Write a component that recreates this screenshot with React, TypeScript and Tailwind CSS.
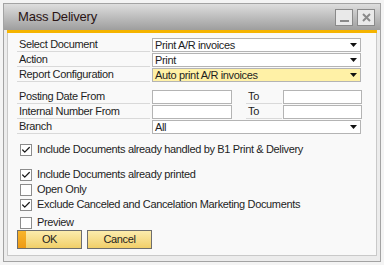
import { Check } from 'lucide-react';

type Row = {
  label: string;
  value: string;
  highlight?: boolean;
};

const topRows: Row[] = [
  { label: 'Select Document', value: 'Print A/R invoices' },
  { label: 'Action', value: 'Print' },
  { label: 'Report Configuration', value: 'Auto print A/R invoices', highlight: true },
];

function Arrow() {
  return (
    <svg width="7" height="4" viewBox="0 0 7 4" className="mr-[3px]">
      <path d="M0 0h7L3.5 4z" fill="#111" />
    </svg>
  );
}

function Combo({ value, highlight }: { value: string; highlight?: boolean }) {
  return (
    <div
      className={`ml-[2px] flex h-[14px] w-[209px] items-center justify-between border border-[#b4b4b4] pl-[2px] ${
        highlight ? 'bg-[#fff1a6]' : 'bg-white'
      }`}
    >
      <span className="leading-none">{value}</span>
      <Arrow />
    </div>
  );
}

function Label({ text, width = 'w-[133px]' }: { text: string; width?: string }) {
  return (
    <div className={`${width} h-[14px] border-b border-[#d9d9d9] pl-[2px] leading-[13px]`}>{text}</div>
  );
}

function CheckRow({ label, checked }: { label: string; checked: boolean }) {
  return (
    <div className="flex h-[15px] items-center gap-[5px] pl-[3px]">
      <div className="flex h-[12px] w-[12px] items-center justify-center border border-[#8c8c8c] bg-white">
        {checked && <Check size={10} strokeWidth={3} color="#1a1a1a" />}
      </div>
      <span className="leading-none">{label}</span>
    </div>
  );
}

export default function App() {
  return (
    <div
      className="h-[265px] w-[384px] bg-[#f4f4f4] pl-[3px] pt-[3px] text-[11px] tracking-[-0.35px] text-[#1e1e1e]"
      style={{ fontFamily: '"Liberation Sans", Arial, sans-serif' }}
    >
      <div className="flex h-[259px] w-[378px] flex-col border border-[#a3a3a3] bg-[#ececec]">
        {/* title bar */}
        <div className="flex h-[26px] items-center justify-between bg-gradient-to-b from-[#dedede] to-[#9e9e9e] pl-[14px] pr-[5px]">
          <span className="text-[13px] tracking-[-0.2px] text-[#2a1414]">Mass Delivery</span>
          <div className="flex gap-[4px] pt-[1px]">
            <div className="flex h-[17px] w-[18px] items-end justify-center border border-[#8a8a8a] bg-[#e9e9e9] pb-[3px]">
              <div className="h-[2px] w-[9px] bg-[#8a8a8a]" />
            </div>
            <div className="flex h-[17px] w-[18px] items-center justify-center border border-[#8a8a8a] bg-[#e9e9e9]">
              <svg width="9" height="9" viewBox="0 0 9 9">
                <path d="M1 1l7 7M8 1l-7 7" stroke="#8a8a8a" strokeWidth="2" />
              </svg>
            </div>
          </div>
        </div>

        <div className="flex flex-1 flex-col px-[3px] pb-[5px]">
          <div className="h-[3px] bg-[#f5b400]" />
          <div className="flex flex-1 flex-col border border-t-0 border-[#c9c9c9] bg-[#f9f9f9] pl-[9px] pt-[5px]">
            <div className="flex flex-col gap-[1px]">
              {topRows.map((row, index) => (
                <div key={index} className="flex h-[14px] items-center">
                  <Label text={row.label} />
                  <Combo value={row.value} highlight={row.highlight} />
                </div>
              ))}
            </div>

            <div className="mt-[8px] flex flex-col gap-[1px]">
              {['Posting Date From', 'Internal Number From'].map((label, index) => (
                <div key={index} className="flex h-[14px] items-center">
                  <Label text={label} />
                  <div className="ml-[2px] h-[14px] w-[80px] border border-[#b4b4b4] bg-white" />
                  <div className="ml-[14px]">
                    <Label text="To" width="w-[36px]" />
                  </div>
                  <div className="ml-[1px] h-[14px] w-[79px] border border-[#b4b4b4] bg-white" />
                </div>
              ))}
              <div className="flex h-[14px] items-center">
                <Label text="Branch" />
                <Combo value="All" />
              </div>
            </div>

            <div className="mt-[8px]">
              <CheckRow label="Include Documents already handled by B1 Print & Delivery" checked />
            </div>
            <div className="mt-[10px] flex flex-col">
              <CheckRow label="Include Documents already printed" checked />
              <CheckRow label="Open Only" checked={false} />
              <CheckRow label="Exclude Canceled and Cancelation Marketing Documents" checked />
            </div>
            <div className="mt-[3px]">
              <CheckRow label="Preview" checked={false} />
            </div>

            <div className="flex gap-[5px] pl-[0px]">
              <button className="relative h-[19px] w-[65px] border border-[#6e6e6e] bg-gradient-to-b from-[#fcecac] to-[#f1cf68] text-[11px]">
                <div className="absolute bottom-0 left-0 top-0 w-[8px] bg-gradient-to-b from-[#f7b52c] to-[#ee9a12]" />
                <span className="relative">OK</span>
              </button>
              <button className="h-[19px] w-[65px] border border-[#6e6e6e] bg-gradient-to-b from-[#fcecac] to-[#f1cf68] text-[11px]">
                Cancel
              </button>
            </div>
          </div>
        </div>
      </div>
    </div>
  );
}
